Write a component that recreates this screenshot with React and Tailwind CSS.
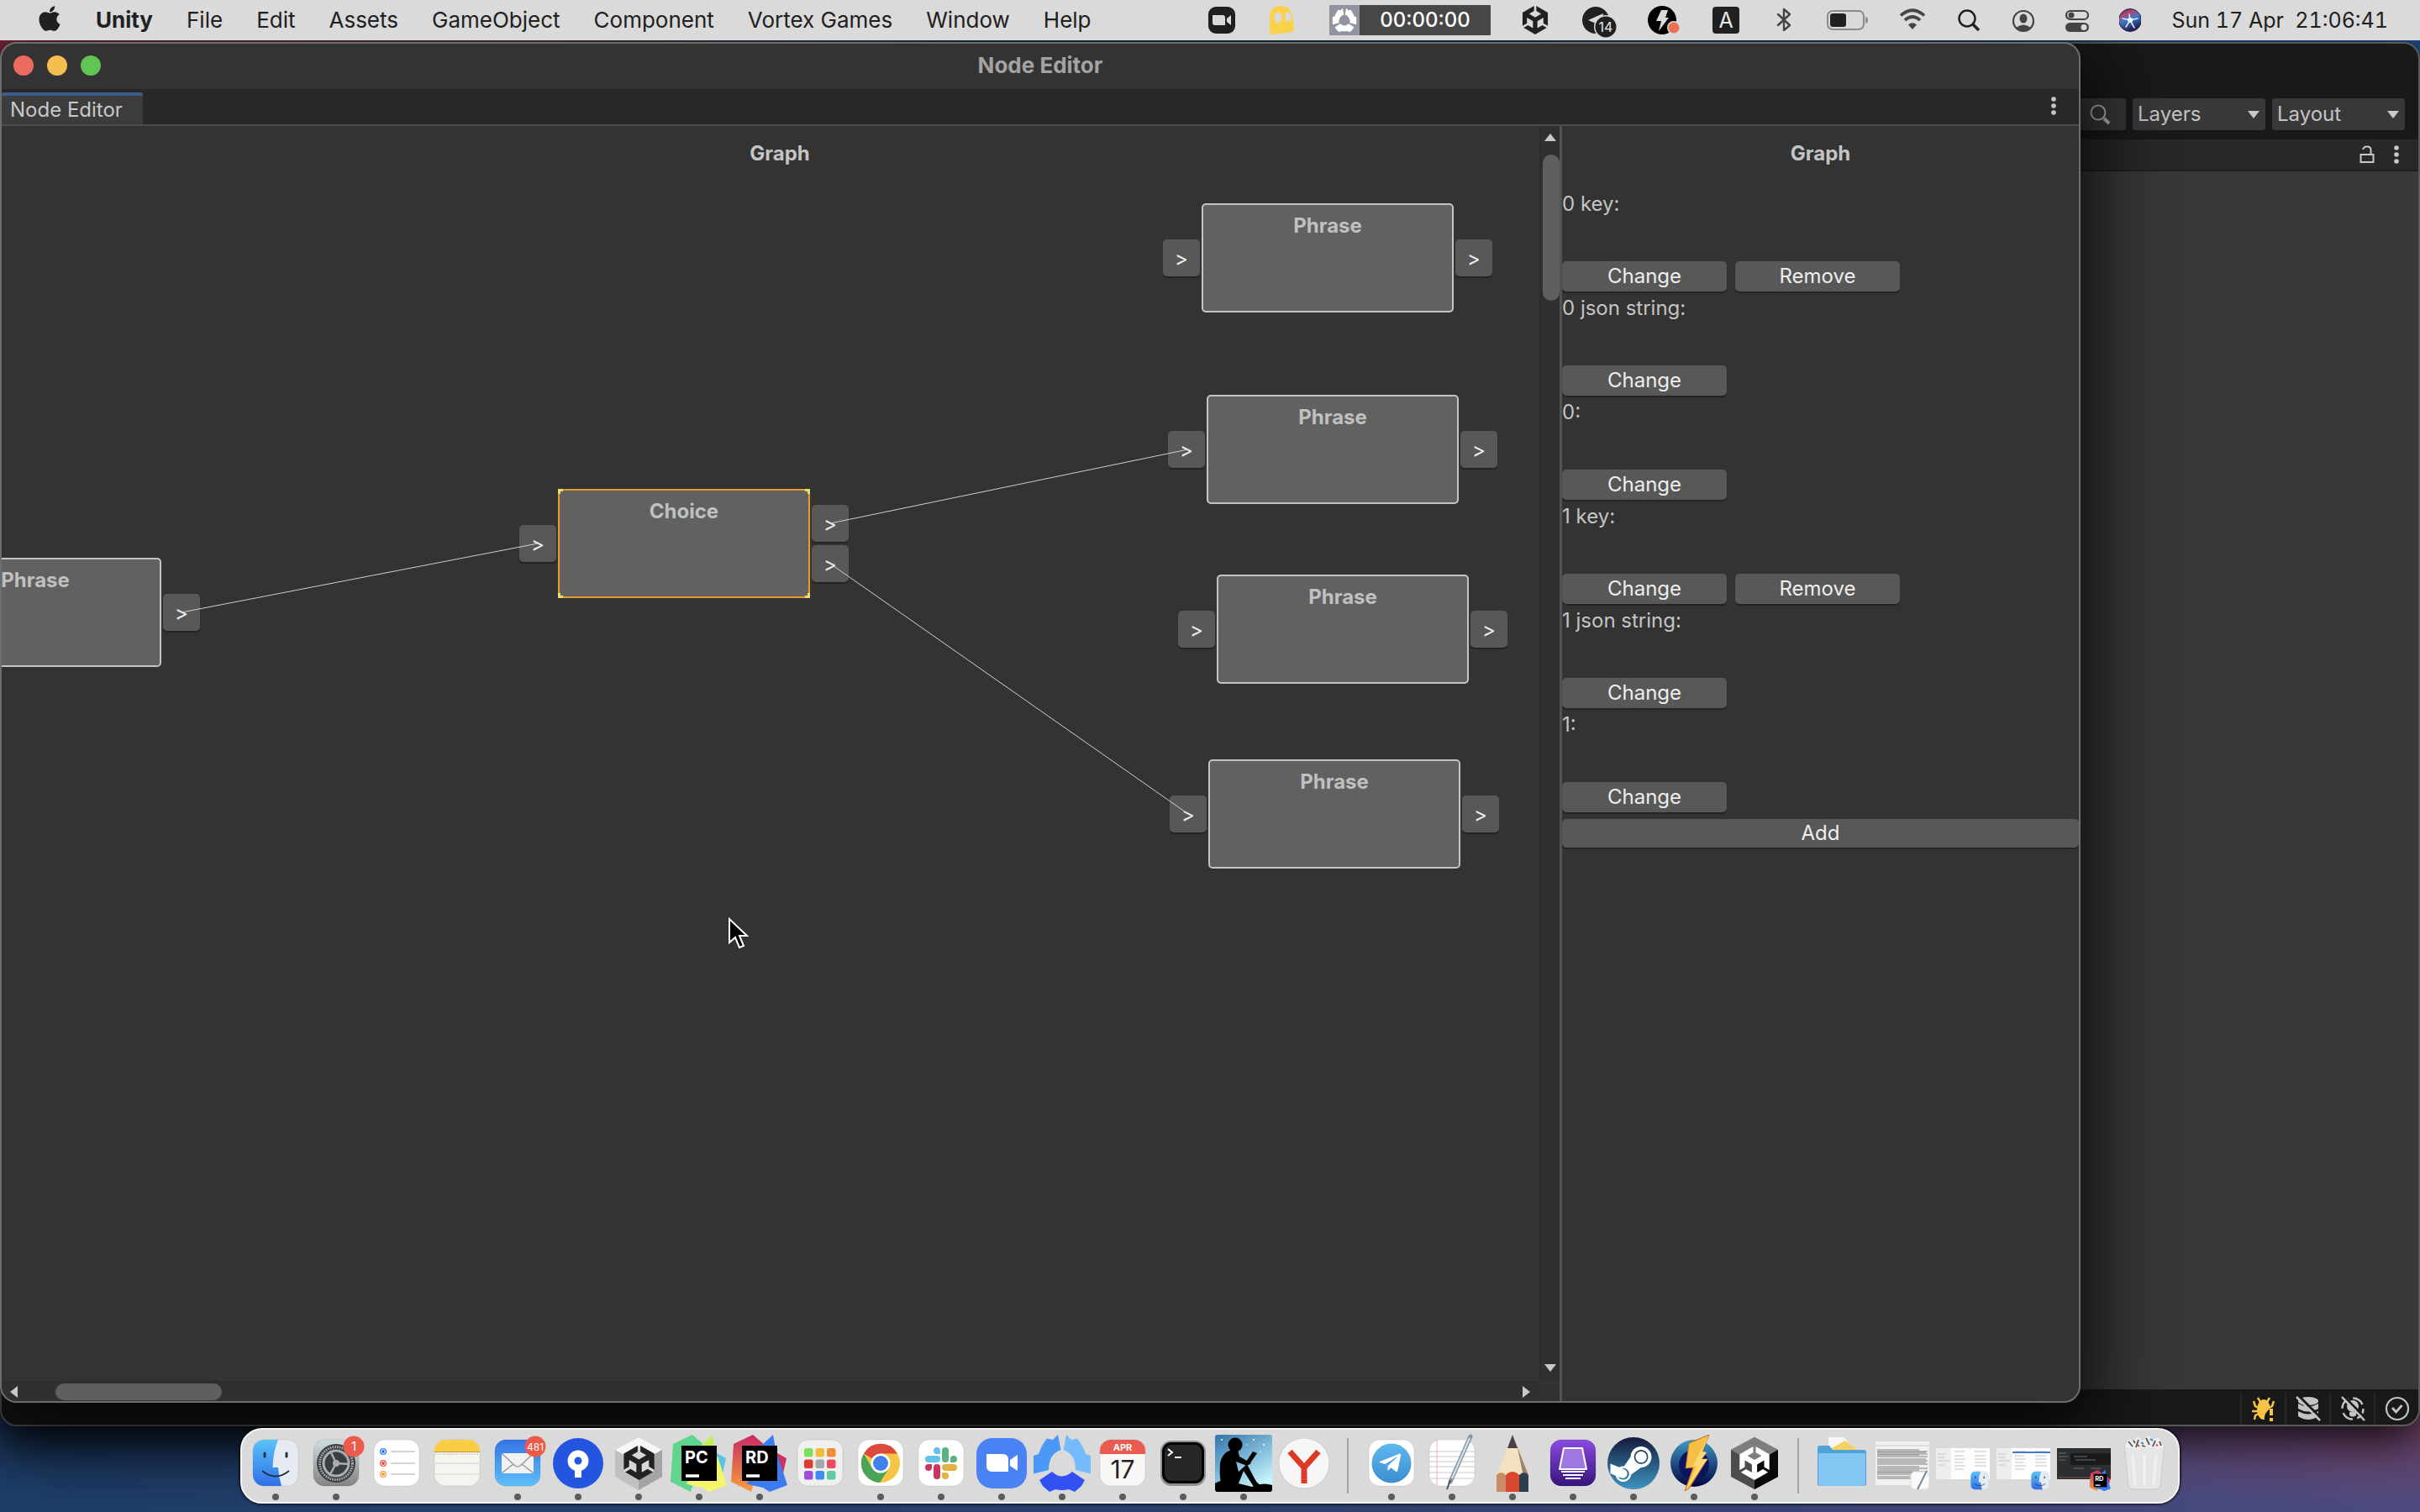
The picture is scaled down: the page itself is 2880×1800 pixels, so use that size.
import React from "react";
import { FaApple, FaSteamSymbol, FaTelegramPlane } from "react-icons/fa";
import { SiUnity } from "react-icons/si";

/* ---------- shared drawings ---------- */

function LinearGradient({ id, from, to, x2 = 0, y2 = 1 }) {
  return (
    <linearGradient id={id} x1="0" y1="0" x2={x2} y2={y2}>
      <stop offset="0" stopColor={from} />
      <stop offset="1" stopColor={to} />
    </linearGradient>
  );
}

function Trefoil({ left, right, bottom }) {
  return (
    <g>
      <path d="M31 2 34.500 20Q20 25 20 44L2 48.500V27L8 25Q11 15 18 6.500L25 8Z" fill={left} />
      <path d="M41 2 37.500 20Q52 25 52 44L70 48.500V27L64 25Q61 15 54 6.500L47 8Z" fill={right} />
      <path d="M24 46Q36 57 48 46L63 56 59 63 51 70 44 67Q36 69 28 67L21 70 13 63 9 56Z" fill={bottom} />
    </g>
  );
}

function Glyph({ w, children, label }) {
  return (
    <svg width={w} height="48" viewBox={`0 0 ${w} 48`} className="shrink-0" role="img" aria-label={label}>
      {children}
    </svg>
  );
}

function KebabIcon() {
  return (
    <svg width="8" height="22" viewBox="0 0 8 22" fill="#c8c8c8">
      <circle cx="4" cy="3" r="2.800" />
      <circle cx="4" cy="11" r="2.800" />
      <circle cx="4" cy="19" r="2.800" />
    </svg>
  );
}

/* ---------- menu bar ---------- */

const menus = ["File", "Edit", "Assets", "GameObject", "Component", "Vortex Games", "Window", "Help"];

function MenuBar() {
  return (
    <header className="relative z-10 flex h-12 shrink-0 items-center justify-between bg-[#dadada] pr-[38px] pl-[42px] text-[26px] leading-8 text-[#202020]">
      <nav className="flex items-center gap-10 whitespace-nowrap">
        <button aria-label="Apple menu" className="-mt-1 w-8"><FaApple size={34} /></button>
        <button className="font-bold">Unity</button>
        {menus.map((m) => <button key={m}>{m}</button>)}
      </nav>
      <div className="flex items-center gap-9">
        <Glyph w={32} label="Camera">
          <rect y="8" width="32" height="32" rx="9" fill="#202020" />
          <path d="M5 18h12a3 3 0 0 1 3 3v9H8a3 3 0 0 1-3-3zM22 22l5-4v12l-5-4z" fill="#dadada" />
        </Glyph>
        <Glyph w={40} label="Ghost">
          <path d="M5 38V20C5 11 11 7 19 7c9 0 13 7 13.500 15L34 33c0 5-3 5-7 6-7 0-12 2-19 2-2 0-3-1-3-3z" fill="#f9d14a" />
          <ellipse cx="15" cy="21" rx="4.500" ry="6.500" fill="#dadada" />
          <ellipse cx="27" cy="20" rx="4" ry="5.500" fill="#dadada" />
        </Glyph>
        <div className="flex h-9 w-48 bg-[#474747] text-white">
          <span className="flex w-9 items-center justify-center bg-[#9295a1]">
            <svg width="30" height="30" viewBox="0 0 72 72"><Trefoil left="#fff" right="#fff" bottom="#fff" /></svg>
          </span>
          <span className="flex flex-1 items-center justify-center text-2xl leading-8 font-medium">00:00:00</span>
        </div>
        <span className="flex w-[34px] justify-center"><SiUnity size={34} /></span>
        <Glyph w={44} label="Telegram, 14 unread">
          <circle cx="19" cy="24" r="16" fill="#202020" />
          <path d="M10 24 28 16 25 30 17 27z" fill="#dadada" />
          <circle cx="31" cy="32" r="14" fill="#dadada" />
          <circle cx="31" cy="32" r="12.500" fill="#202020" />
          <text x="31" y="38" textAnchor="middle" fontSize="16" fill="#e8e8e8">14</text>
        </Glyph>
        <Glyph w={40} label="Power">
          <circle cx="18" cy="24" r="17" fill="#000" />
          <path d="M17 12h8l-3 9h4L14 37l3-12h-6z" fill="#dadada" />
          <circle cx="32" cy="33" r="8" fill="#dadada" />
          <circle cx="32" cy="33" r="6.500" fill="#ec7150" />
        </Glyph>
        <Glyph w={36} label="Input source">
          <rect x="2" y="8" width="32" height="32" rx="4" fill="#202020" />
          <text x="18" y="33" textAnchor="middle" fontSize="25" fill="#e8e8e8">A</text>
        </Glyph>
        <span className="flex w-[30px] justify-center">
          <svg width="20" height="30" viewBox="0 0 20 30" fill="none" stroke="#444" strokeWidth="2.400" strokeLinejoin="round" strokeLinecap="round">
            <path d="M3 8 17 21 10 27V2l7 6L3 21" />
          </svg>
        </span>
        <Glyph w={50} label="Battery">
          <rect x="1" y="13" width="43" height="22" rx="6" fill="none" stroke="#8a8a8a" strokeWidth="2" />
          <rect x="4" y="16" width="19" height="16" rx="3" fill="#202020" />
          <path d="M46 20c4 1 4 7 0 8z" fill="#8a8a8a" />
        </Glyph>
        <Glyph w={32} label="Wi-Fi">
          <path d="M2 18.500Q16 6 30 18.500M7 24Q16 16 25 24" fill="none" stroke="#444" strokeWidth="3.600" />
          <path d="M11 29.500Q16 25 21 29.500L16 35z" fill="#444" />
        </Glyph>
        <Glyph w={30} label="Search">
          <circle cx="13" cy="22" r="9.500" fill="none" stroke="#202020" strokeWidth="2.500" />
          <path d="M20 29l7 7" stroke="#202020" strokeWidth="3.400" />
        </Glyph>
        <Glyph w={28} label="User">
          <circle cx="14" cy="25" r="12" fill="none" stroke="#444" strokeWidth="2.200" />
          <ellipse cx="14" cy="22" rx="4.500" ry="5.500" fill="#444" />
          <path d="M5 33Q14 26 23 33 14 41 5 33z" fill="#444" />
        </Glyph>
        <Glyph w={28} label="Control centre">
          <rect x="1" y="13" width="26" height="10" rx="5" fill="none" stroke="#444" strokeWidth="2.200" />
          <circle cx="7" cy="18" r="3.500" fill="#444" />
          <rect y="27" width="28" height="11" rx="5.500" fill="#444" />
          <circle cx="22" cy="32.500" r="3.500" fill="#dadada" />
        </Glyph>
        <Glyph w={26} label="Siri">
          <defs>
            <linearGradient id="siri" x1="0" y1="0" x2="0.400" y2="1">
              <stop offset="0" stopColor="#3b2a63" />
              <stop offset="0.300" stopColor="#b8446f" />
              <stop offset="0.550" stopColor="#3f78c8" />
              <stop offset="1" stopColor="#241c50" />
            </linearGradient>
          </defs>
          <circle cx="13" cy="24" r="13.500" fill="url(#siri)" stroke="#2a2450" />
          <path d="M13 24 22 22M13 24 18 33M13 24 8 32M13 24 4 22M13 24 12 17" stroke="#c8eef8" strokeWidth="1.600" strokeLinecap="round" />
          <circle cx="13" cy="24" r="3" fill="#e8fafd" />
        </Glyph>
        <time className="w-[258px] text-right text-[25px] whitespace-pre tabular-nums">Sun 17 Apr  21:06:41</time>
      </div>
    </header>
  );
}

/* ---------- background editor window ---------- */

function ToolbarSelect({ label }) {
  return (
    <label className="relative block">
      <select aria-label={label} className="h-[38px] w-[158px] appearance-none rounded-[3px] bg-[#383838] pl-[6px] text-2xl leading-8 text-[#c4c4c4]">
        <option>{label}</option>
      </select>
      <svg width="14" height="9" viewBox="0 0 14 9" className="pointer-events-none absolute top-[15px] right-[7px]">
        <path d="M0 0h14L7 9z" fill="#c8c8c8" />
      </svg>
    </label>
  );
}

function StatusButton({ label, children }) {
  return (
    <button aria-label={label} className="flex w-[53px] items-center justify-center border-l-2 border-[#262626]">
      <svg width="30" height="30" viewBox="0 0 30 30">{children}</svg>
    </button>
  );
}

function EditorWindow() {
  return (
    <section className="absolute inset-x-0 top-[2px] bottom-[102px] flex flex-col overflow-hidden rounded-[20px] border-2 border-[#5a5a5a] bg-[#191919] shadow-[0_16px_50px_rgba(0,0,0,0.85)]">
      <div className="flex h-[114px] items-end justify-end gap-2 pr-4 pb-[11px]">
        <button aria-label="Search" className="flex h-[38px] w-20 items-center justify-end rounded-[3px] bg-[#383838] pr-[18px]">
          <svg width="25" height="25" viewBox="0 0 25 25" fill="none" stroke="#b4b4b4">
            <circle cx="10" cy="10" r="8.500" strokeWidth="2" />
            <path d="M17 17l6 6" strokeWidth="4" />
          </svg>
        </button>
        <ToolbarSelect label="Layers" />
        <ToolbarSelect label="Layout" />
      </div>
      <div className="flex h-[38px] items-center justify-end gap-[22px] border-b-2 border-[#202020] bg-[#282828] pr-[22px]">
        <svg width="18" height="22" viewBox="0 0 18 22" fill="none" stroke="#c8c8c8" strokeWidth="2">
          <rect x="1.500" y="11" width="15" height="9" />
          <path d="M4 5Q5 1.500 9 1.500q4.500 0 4.500 4V11" />
        </svg>
        <KebabIcon />
      </div>
      <div className="flex-1 bg-[#383838]" />
      <footer className="flex h-[42px] justify-end pt-1">
        <StatusButton label="Debugger">
          <ellipse cx="15" cy="16" rx="8" ry="12" fill="#f7c344" />
          <path d="M8 2l3 5M22 2l-3 5M3 6l2 6 4 2M27 6l-2 6-4 2M1 18h7M4 28l1-5 4-2" fill="none" stroke="#f7c344" strokeWidth="2.500" />
          <path d="M30 14v16H16q-2-10 8-16z" fill="#191919" />
          <path d="M24 15v8M24 26v4" stroke="#f7c344" strokeWidth="4" />
        </StatusButton>
        <StatusButton label="Cache server">
          <ellipse cx="15" cy="6" rx="12" ry="5" fill="#c4c4c4" />
          <path d="M3 9q12 7 24 0v6q-12 7-24 0zM3 18q12 7 24 0v6q-12 8-24 0z" fill="#c4c4c4" />
          <path d="M5 1l27 27" stroke="#191919" strokeWidth="3" />
          <path d="M1 1l28 28" stroke="#c4c4c4" strokeWidth="2.500" />
        </StatusButton>
        <StatusButton label="Auto lighting">
          <circle cx="15" cy="15" r="12.500" fill="none" stroke="#c4c4c4" strokeWidth="2.500" strokeDasharray="14 5.600" />
          <circle cx="15" cy="12" r="7" fill="#c4c4c4" />
          <path d="M11 19h8v4q-4 3-8 0z" fill="#c4c4c4" />
          <path d="M5 1l27 27" stroke="#191919" strokeWidth="3" />
          <path d="M2 1l27 28" stroke="#c4c4c4" strokeWidth="2.500" />
        </StatusButton>
        <StatusButton label="Progress">
          <circle cx="15" cy="15" r="13" fill="none" stroke="#c4c4c4" strokeWidth="2.200" />
          <path d="M9 14l4.500 5 7-8" fill="none" stroke="#c4c4c4" strokeWidth="2.800" />
        </StatusButton>
      </footer>
    </section>
  );
}

/* ---------- node graph ---------- */

const nodes = [
  { title: "Phrase", inputs: [65], outputs: [65], place: "left-[-110px] top-[514px]" },
  { title: "Choice", inputs: [65], outputs: [41, 89], place: "left-[662px] top-[432px]", selected: true },
  { title: "Phrase", inputs: [65], outputs: [65], place: "left-[1428px] top-[92px]" },
  { title: "Phrase", inputs: [65], outputs: [65], place: "left-[1434px] top-[320px]" },
  { title: "Phrase", inputs: [65], outputs: [65], place: "left-[1446px] top-[534px]" },
  { title: "Phrase", inputs: [65], outputs: [65], place: "left-[1436px] top-[754px]" },
];

function Port({ label }) {
  return (
    <button aria-label={label} className="h-11 w-11 rounded-[5px] bg-[#585858] pt-[2px] text-2xl leading-8 text-[#eee] shadow-[0_2px_1px_#242424]">
      &gt;
    </button>
  );
}

function Node({ title, inputs, outputs, place, selected }) {
  return (
    <div className={`absolute flex items-center ${place}`}>
      <div className="absolute right-full mr-[2px] flex flex-col gap-1">
        {inputs.map((p) => <Port key={p} label={`${title} input`} />)}
      </div>
      <div className={`h-[130px] w-[300px] border-2 bg-[#616161] pt-[9px] text-center text-2xl leading-8 font-bold text-[#c0c0c0] ${selected ? "border-[#e89a2e]" : "rounded-[5px] border-[#c4c4c4]"}`}>
        {title}
      </div>
      {selected && (
        <svg width="300" height="130" viewBox="0 0 300 130" className="pointer-events-none absolute inset-0" fill="none" stroke="#e6e06a" strokeWidth="3">
          <path d="M1.500 6V1.500H6M294 1.500h4.500V6M1.500 124v4.500H6M294 128.500h4.500V124" />
        </svg>
      )}
      <div className="absolute left-full ml-[2px] flex flex-col gap-1">
        {outputs.map((p) => <Port key={p} label={`${title} output`} />)}
      </div>
    </div>
  );
}

function ScrollArrow({ label, d, w, h, size = "h-6 w-6" }) {
  return (
    <button aria-label={label} className={`flex shrink-0 items-center justify-center ${size}`}>
      <svg width={w} height={h} viewBox={`0 0 ${w} ${h}`}><path d={d} fill="#c8c8c8" /></svg>
    </button>
  );
}

function Canvas() {
  return (
    <div className="grid min-w-0 flex-1 grid-cols-[1fr_24px] grid-rows-[1fr_24px]">
      <div className="relative min-w-0 overflow-hidden">
        <h2 className="w-[1852px] pt-[17px] text-center text-2xl leading-8 font-bold text-[#c4c4c4]">Graph</h2>
        {nodes.map((n) => <Node key={n.place} {...n} />)}
        <svg width="1830" height="1400" viewBox="0 0 1830 1400" className="pointer-events-none absolute top-0 left-0" fill="none" stroke="#cfcfcf">
          <path d="M214 579 638 497M986 473 1412 385M986 521 1412 819" />
          <path d="M866 944v28l7-6 5 12 5-2-5-12h9z" fill="#000" stroke="#fff" strokeWidth="2" />
        </svg>
      </div>
      <div className="flex flex-col items-center border-l-2 border-[#2d2d2d] bg-[#303030]">
        <ScrollArrow label="Scroll up" d="M0 9h14L7 0z" w={14} h={9} size="h-[26px] w-6" />
        <div className="flex w-full flex-1 flex-col items-end pt-2">
          <div className="h-[174px] w-5 rounded-full bg-[#5f5f5f]" />
        </div>
        <ScrollArrow label="Scroll down" d="M0 0h14L7 9z" w={14} h={9} size="h-8 w-6" />
      </div>
      <div className="flex items-center border-t-2 border-[#2d2d2d] bg-[#303030]">
        <ScrollArrow label="Scroll left" d="M9 0v14L0 7z" w={9} h={14} size="h-6 w-7" />
        <div className="flex-1 pl-9">
          <div className="h-5 w-[198px] rounded-full bg-[#5f5f5f]" />
        </div>
        <ScrollArrow label="Scroll right" d="M0 0v14l9-7z" w={9} h={14} size="h-6 w-8" />
      </div>
      <div className="bg-[#323232]" />
    </div>
  );
}

/* ---------- inspector column ---------- */

const fields = [
  { label: "0 key:", removable: true },
  { label: "0 json string:" },
  { label: "0:" },
  { label: "1 key:", removable: true },
  { label: "1 json string:" },
  { label: "1:" },
];

function PanelButton({ children, wide }) {
  return (
    <button className={`rounded-[5px] bg-[#585858] text-2xl leading-8 text-[#eee] shadow-[0_2px_1px_#242424] ${wide ? "h-[34px] w-full" : "h-9 w-[196px]"}`}>
      {children}
    </button>
  );
}

function Inspector() {
  return (
    <aside className="w-[618px] shrink-0 border-l-[3px] border-[#525450]">
      <h2 className="pt-[17px] pb-[26px] text-center text-2xl leading-8 font-bold text-[#c4c4c4]">Graph</h2>
      {fields.map((f) => (
        <div key={f.label} className="pb-[2px]">
          <p className="h-[86px] pt-[2px] text-2xl leading-8 text-[#c4c4c4]">{f.label}</p>
          <div className="flex gap-[10px]">
            <PanelButton>Change</PanelButton>
            {f.removable && <PanelButton>Remove</PanelButton>}
          </div>
        </div>
      ))}
      <div className="pt-[6px]"><PanelButton wide>Add</PanelButton></div>
    </aside>
  );
}

function NodeEditorWindow() {
  return (
    <section className="absolute top-[2px] right-[404px] bottom-[130px] left-0 flex flex-col overflow-hidden rounded-[20px] border-2 border-[#6d6d6d] bg-[#333] shadow-[0_30px_90px_20px_rgba(0,0,0,0.75)]">
      <div className="relative flex h-[54px] shrink-0 items-center justify-center pb-[2px]">
        <div className="absolute left-[14px] flex gap-4">
          <button aria-label="Close" className="h-6 w-6 rounded-full bg-[#ed6a5e]" />
          <button aria-label="Minimise" className="h-6 w-6 rounded-full bg-[#f5bf4f]" />
          <button aria-label="Zoom" className="h-6 w-6 rounded-full bg-[#61c554]" />
        </div>
        <h1 className="text-[26px] leading-8 font-bold text-[#a3a3a3]">Node Editor</h1>
      </div>
      <div className="flex h-[44px] shrink-0 items-end justify-between border-b-2 border-[#4c4c4c] bg-[#282828] pr-[26px]">
        <button className="h-[38px] w-[168px] rounded-t-[3px] border-t-4 border-[#3a5f8f] bg-[#3c3c3c] pl-[10px] text-left text-2xl leading-8 text-[#c8c8c8]">
          Node Editor
        </button>
        <button aria-label="Window options" className="mb-[11px]"><KebabIcon /></button>
      </div>
      <div className="flex min-h-0 flex-1">
        <Canvas />
        <Inspector />
      </div>
    </section>
  );
}

/* ---------- dock ---------- */

function Tile({ fill = "#fff" }) {
  return <rect x="9" y="8" width="54" height="55" rx="13" fill={fill} stroke="#00000018" />;
}

function Badge({ text }) {
  return (
    <g>
      <circle cx="57" cy="16" r="12.500" fill="#eb5a4b" />
      <text x="57" y="21" textAnchor="middle" fontSize={text.length > 2 ? 12 : 15} fill="#fff">{text}</text>
    </g>
  );
}

function FinderFace() {
  return (
    <g>
      <Tile fill="#e6ebf3" />
      <path d="M22 8H39Q33 22 32.500 41H39Q39.500 52 43 63H22A13 13 0 0 1 9 50V21A13 13 0 0 1 22 8z" fill="url(#d-finder)" />
      <path d="M23 24v4M49 24v4" stroke="#22303f" strokeWidth="3" strokeLinecap="round" />
      <path d="M20 45Q36 58 52 45" fill="none" stroke="#22303f" strokeWidth="1.800" />
    </g>
  );
}

function JetBrains({ text, a, b, c, d }) {
  return (
    <g>
      <path d="M5 13 28 2 42 14 34 44 26 70 2 58z" fill={a} />
      <path d="M38 15 52 2 56 25z" fill={b} />
      <path d="M50 20 68 30 64 48 50 50z" fill={c} />
      <path d="M20 60 58 28 69 62 48 70 40 65 26 62z" fill={d} />
      <rect x="15" y="15" width="42" height="42" fill="#000" />
      <text x="19" y="36" fontSize="20" fontWeight="700" fill="#fff">{text}</text>
      <path d="M20 51h16" stroke="#fff" strokeWidth="3.500" />
    </g>
  );
}

function RiderIcon() {
  return <JetBrains text="RD" a="url(#d-rd)" b="#3b7cf0" c="#d0305f" d="#3c7bf0" />;
}

function DocThumb() {
  const rows = [24, 27, 30, 35, 39, 44, 48, 51, 56];
  return (
    <g>
      <rect x="4" y="10" width="64" height="52" fill="#f0f0f0" />
      <path d="M4 15h64" stroke="#ccc" />
      {rows.map((y) => <path key={y} d={`M6 ${y - 4}h${y % 2 ? 58 : 50}M6 ${y - 2}h60`} stroke="#808080" />)}
      <rect x="46" y="46" width="22" height="21" rx="5" fill="#fafafa" stroke="#ddd" />
      <path d="M65 45 54 67" stroke="#778899" strokeWidth="2" />
    </g>
  );
}

function FinderThumb({ highlighted }) {
  return (
    <g>
      <rect x="4" y="18" width="64" height="37" fill="#fdfdfd" />
      <path d="M4 18h18v37H4z" fill="#ededed" />
      <path d="M6 25h9M6 29h8M6 33h14M6 38h8M26 22h12M26 27h11M26 31h13M26 35h10M26 39h13M26 43h11M50 22h14M50 27h13M50 31h14M50 35h13M50 39h14" stroke="#c4c4c4" />
      {highlighted && <path d="M23 23h45" stroke="#4378d8" strokeWidth="2" />}
      <svg x="45" y="45" width="22" height="23" viewBox="8 7 56 57"><FinderFace /></svg>
    </g>
  );
}

const dockGroups = [
  [
    { name: "Finder", running: true, art: <FinderFace /> },
    {
      name: "System Preferences", running: true,
      art: (
        <g>
          <Tile fill="url(#d-grey)" />
          <circle cx="36" cy="36" r="23" fill="#3b3e41" />
          <circle cx="36" cy="36" r="19.500" fill="none" stroke="#a9adb0" strokeWidth="3" strokeDasharray="1.600 1.200" />
          <circle cx="36" cy="36" r="15" fill="none" stroke="#a9adb0" strokeWidth="3" />
          <path d="M36 36 29 21M36 36 52 37M36 36 28 51" stroke="#a9adb0" strokeWidth="2.500" />
          <circle cx="36" cy="36" r="4" fill="#a9adb0" />
          <Badge text="1" />
        </g>
      ),
    },
    {
      name: "Reminders",
      art: (
        <g>
          <Tile />
          {[["#3478f6", 22], ["#eb4b3d", 36], ["#f09a37", 49]].map(([c, y]) => (
            <g key={y}>
              <circle cx="20" cy={y} r="4" fill={c} />
              <circle cx="20" cy={y} r="2.500" fill={c} stroke="#fff" />
              <path d={`M29 ${y}h29`} stroke="#c4c4c8" strokeWidth="1.500" />
            </g>
          ))}
        </g>
      ),
    },
    {
      name: "Notes",
      art: (
        <g>
          <Tile fill="#f5f4ef" />
          <path d="M9 22v-1A13 13 0 0 1 22 8H50A13 13 0 0 1 63 21v1z" fill="#f9cd45" />
          <path d="M9 22.500h54" stroke="#b99a3a" />
          <path d="M10 25h52" stroke="#999" strokeDasharray="1 1.500" />
          <path d="M10 36h52M10 49h52" stroke="#d0d0cc" />
        </g>
      ),
    },
    {
      name: "Mail", running: true,
      art: (
        <g>
          <Tile fill="url(#d-mail)" />
          <rect x="17" y="24" width="38" height="24" rx="3" fill="#f2f2f2" />
          <path d="M18 25 33 39q3 2 6 0L54 25M18 47 31 37M54 47 41 37" fill="none" stroke="#9a9a9a" strokeWidth="1.500" />
          <Badge text="481" />
        </g>
      ),
    },
    {
      name: "Sourcetree", running: true,
      art: (
        <g>
          <circle cx="36" cy="36" r="30" fill="#2355e0" />
          <circle cx="36" cy="33" r="8.500" fill="none" stroke="#fff" strokeWidth="8" />
          <path d="M36 41v12" stroke="#fff" strokeWidth="8" />
        </g>
      ),
    },
    {
      name: "Unity Hub", running: true,
      art: (
        <g>
          <path d="M36 5 64 20V52L36 68 8 52V20z" fill="#c0c0c0" />
          <path d="M36 5 64 20 36 36 8 20z" fill="#f6f6f6" />
          <path d="M36 36 64 20V52L36 68z" fill="#a4a4a4" />
          <path d="M36 16 54 26V46L36 56 18 46V26z" fill="#d8d8d8" />
          <SiUnity x={16} y={15} size={41} color="#222" />
        </g>
      ),
    },
    { name: "PyCharm", running: true, art: <JetBrains text="PC" a="#5fd58d" b="#c2f05a" c="#5ac3e8" d="#f5f66a" /> },
    { name: "Rider", running: true, art: <RiderIcon /> },
    {
      name: "Launchpad",
      art: (
        <g>
          <Tile fill="#f0f0f0" />
          {["#7ce05a", "#f5b93b", "#ef8e34", "#dd3a30", "#a4a8ac", "#ee4863", "#a14bd8", "#3d8cf5", "#5fcca0"].map((c, i) => (
            <rect key={c} x={17 + (i % 3) * 13.5} y={18 + Math.floor(i / 3) * 13.5} width="10.500" height="10.500" rx="2.500" fill={c} />
          ))}
        </g>
      ),
    },
    {
      name: "Chrome", running: true,
      art: (
        <g>
          <Tile />
          <circle cx="36" cy="36" r="23" fill="#f7c544" />
          <path d="M36 36 16 24.500A23 23 0 0 1 56 24.500H36z" fill="#dc4a3d" />
          <path d="M16 24.500A23 23 0 0 0 35 59L46 42 26 42z" fill="#4aa457" />
          <circle cx="36" cy="36" r="11.500" fill="#fff" />
          <circle cx="36" cy="36" r="9" fill="#4081ec" />
        </g>
      ),
    },
    {
      name: "Slack", running: true,
      art: (
        <g>
          <Tile />
          <g fill="#62c4ec"><rect x="17" y="27" width="18" height="8" rx="4" /><path d="M35 25h-4a4 4 0 1 1 4-4z" /></g>
          <g fill="#5bb381"><rect x="37" y="17" width="8" height="18" rx="4" /><path d="M47 35v-4a4 4 0 1 1 4 4z" /></g>
          <g fill="#e0b344"><rect x="37" y="37" width="18" height="8" rx="4" /><path d="M37 47h4a4 4 0 1 1-4 4z" /></g>
          <g fill="#d0335f"><rect x="27" y="37" width="8" height="18" rx="4" /><path d="M25 37v4a4 4 0 1 1-4-4z" /></g>
        </g>
      ),
    },
    {
      name: "Zoom", running: true,
      art: (
        <g>
          <rect x="6" y="6" width="60" height="60" rx="19" fill="#4a82f4" />
          <path d="M18 25h20a6 6 0 0 1 6 6v15H24a6 6 0 0 1-6-6zM46 32l9-6v19l-9-6z" fill="#fff" />
        </g>
      ),
    },
    { name: "Time tracker", running: true, art: <Trefoil left="#4a98f8" right="#76bbfb" bottom="#3350f2" /> },
    {
      name: "Calendar", running: true,
      art: (
        <g>
          <Tile fill="#f8f7f5" />
          <path d="M9 25v-4A13 13 0 0 1 22 8H50A13 13 0 0 1 63 21v4z" fill="#eb5a4e" />
          <text x="36" y="21" textAnchor="middle" fontSize="11" fontWeight="700" fill="#fff">APR</text>
          <text x="36" y="54" textAnchor="middle" fontSize="30" fill="#222">17</text>
        </g>
      ),
    },
    {
      name: "Terminal", running: true,
      art: (
        <g>
          <rect x="9" y="9" width="54" height="54" rx="13" fill="#8d9093" />
          <rect x="11" y="11" width="50" height="49" rx="11" fill="#000" />
          <rect x="14" y="14" width="44" height="43" rx="8" fill="#262626" />
          <path d="M18 19l5 4-5 4M26 29h8" fill="none" stroke="#fff" strokeWidth="2" />
        </g>
      ),
    },
    {
      name: "Kindle", running: true,
      art: (
        <g>
          <rect x="2" y="2" width="68" height="68" rx="3" fill="url(#d-kindle)" />
          <path d="M2 60Q10 54 22 58L46 64Q60 58 70 62V67a3 3 0 0 1-3 3H5a3 3 0 0 1-3-3z" />
          <circle cx="26" cy="14" r="8.500" />
          <path d="M21 20Q10 24 8 36Q7 50 9 60H30L36 45 48 64 58 63Q52 60 50 56L40 37 30 46 27 34 40 39 45 36 40 33 31 28 29 20z" />
          <path d="M39 34 47 22 52 24 43 37z" />
          <g fill="#fff"><circle cx="48" cy="8" r="1" /><circle cx="60" cy="14" r="1" /><circle cx="10" cy="8" r="1" /><circle cx="56" cy="22" r="0.700" /><circle cx="40" cy="14" r="0.700" /></g>
        </g>
      ),
    },
    {
      name: "Yandex",
      art: (
        <g>
          <circle cx="36" cy="36" r="30" fill="#f6f6f6" stroke="#0000001c" />
          <path d="M19 22 36 41 53 22M36 39V60" fill="none" stroke="#dc3a26" strokeWidth="7" />
        </g>
      ),
    },
  ],
  [
    {
      name: "Telegram", running: true,
      art: (
        <g>
          <Tile />
          <circle cx="36" cy="36" r="23.500" fill="url(#d-telegram)" />
          <FaTelegramPlane x={20} y={21} size={29} color="#fff" />
        </g>
      ),
    },
    {
      name: "TextEdit", running: true,
      art: (
        <g>
          <Tile />
          <path d="M9 22h54M9 28h54M9 34h54M9 40h54M9 47h54M9 54h54" stroke="#c4c8cc" />
          <path d="M18 8v55" stroke="#f0b4b4" />
          <path d="M58 4 34 58" stroke="#8296a8" strokeWidth="5" strokeLinecap="round" />
          <path d="M57 6 36 54" stroke="#dbe5ee" strokeWidth="2" />
          <path d="M34 56 30 67" stroke="#555" strokeWidth="2" />
        </g>
      ),
    },
    {
      name: "Pencil", running: true,
      art: (
        <g>
          <path d="M36 2 55 50V70H17V50z" fill="#f2e2c0" />
          <path d="M36 2 55 50 48 47 42 18z" fill="#a08468" />
          <path d="M36 2 42 18H30z" fill="#4a4148" />
          <path d="M17 50q5-6 11 0V70H17z" fill="#c98c66" />
          <path d="M28 50q8-8 16 0V70H28z" fill="#d8472f" />
          <path d="M44 50q6-6 11 0V70H44z" fill="#2f3e4c" />
        </g>
      ),
    },
    {
      name: "Screen recorder", running: true,
      art: (
        <g>
          <Tile fill="url(#d-purple)" />
          <path d="M25 18H47L52 43H20z" fill="#a077e2" stroke="#fff" strokeWidth="2" strokeLinejoin="round" />
          <path d="M22 46h28M24 50h24M27 54h18" stroke="#fff" strokeWidth="2" />
        </g>
      ),
    },
    {
      name: "Steam", running: true,
      art: (
        <g>
          <circle cx="36" cy="36" r="31" fill="url(#d-steam)" />
          <FaSteamSymbol x={5} y={9} size={56} color="#fff" />
        </g>
      ),
    },
    {
      name: "Bolt", running: true,
      art: (
        <g>
          <circle cx="36" cy="36" r="28" fill="url(#d-bolt)" />
          <circle cx="36" cy="38" r="18" fill="#0a1560" />
          <path d="M54 2 30 12 26 42 35 41 25 69 30 66 52 31 45 31 51 23 46 22z" fill="#f6bf45" stroke="#b5682c" />
          <path d="M54 2 34 40 40 39 25 69 52 31 45 31 51 23 46 22z" fill="#fbd873" />
        </g>
      ),
    },
    {
      name: "Unity", running: true,
      art: (
        <g>
          <path d="M36 5 64 20V52L36 67 8 52V20z" fill="#4c4c4c" />
          <path d="M36 5 64 20 36 36 8 20z" fill="#7e7e7e" />
          <path d="M36 36 64 20V52L36 67z" fill="#0a0a0a" />
          <SiUnity x={16} y={16} size={40} color="#fff" />
        </g>
      ),
    },
  ],
  [
    {
      name: "Downloads",
      art: (
        <g>
          <path d="M20 5h18l8 8v14H20z" fill="#f7f7f7" />
          <path d="M20 20 40 9 56 21V28H20z" fill="#f6d263" />
          <path d="M7 18q0-3 3-3h11l4 5H62q3 0 3 3V60q0 3-3 3H10q-3 0-3-3z" fill="#4fa3d8" />
          <path d="M8 24H64V60q0 3-3 3H11q-3 0-3-3z" fill="#83c8f4" />
        </g>
      ),
    },
    { name: "Document window", art: <DocThumb /> },
    { name: "Finder window one", art: <FinderThumb /> },
    { name: "Finder window two", art: <FinderThumb highlighted /> },
    {
      name: "Rider window",
      art: (
        <g>
          <rect x="4" y="18" width="64" height="37" fill="#2c2e30" />
          <path d="M20 24h48v14H20z" fill="#181a1b" />
          <path d="M6 24h9M6 28h11M6 32h8M24 28h16M26 32h24M24 42h12M44 42h12" stroke="#6a6f73" />
          <path d="M5 53h40" stroke="#8a4a4a" />
          <svg x="42" y="43" width="27" height="27" viewBox="0 0 72 72"><RiderIcon /></svg>
        </g>
      ),
    },
    {
      name: "Bin",
      art: (
        <g>
          <path d="M12 13H60L55 62Q54 67 48 67H24Q18 67 17 62z" fill="#e6e6e6" stroke="#cbcbcb" />
          <path d="M13 16 17 7 23 10 28 4 34 9 40 3 46 8 52 5 59 15 52 19 40 17 30 20 20 18z" fill="#ededed" />
          <path d="M17 10l5 6M23 9l2 3M29 8l-3 9M38 6l4 8M49 9l-3 7M54 10l2 5M33 15l4 1" stroke="#555" strokeWidth="1.800" />
          <path d="M32 11l3 2M43 7l3 2" stroke="#3f7fd0" strokeWidth="2" />
          <path d="M28 14l2 2M50 14l2 1" stroke="#c9573a" strokeWidth="2" />
          <path d="M22 26l3 36M50 26l-3 36M36 26v36" stroke="#f2f2f2" strokeWidth="3" />
        </g>
      ),
    },
  ],
];

function DockItem({ name, art, running }) {
  return (
    <button aria-label={name} className="flex w-[72px] flex-col items-center">
      <svg width="72" height="72" viewBox="0 0 72 72" className="overflow-visible">{art}</svg>
      <span className={`h-2 w-2 rounded-full ${running ? "bg-[#5c5c5c]" : ""}`} />
    </button>
  );
}

function Dock() {
  return (
    <footer className="absolute bottom-[10px] left-1/2 flex h-[90px] -translate-x-1/2 rounded-[26px] border-2 border-[#f4f4f4] bg-[#dadada] px-1 pt-1 shadow-[0_0_3px_1px_rgba(0,0,0,0.9)]">
      <svg width="0" height="0" className="absolute">
        <defs>
          <LinearGradient id="d-finder" from="#5bc3f8" to="#2f6fe8" />
          <LinearGradient id="d-grey" from="#cfdde2" to="#86847f" />
          <LinearGradient id="d-mail" from="#3573e6" to="#5cc0f8" />
          <LinearGradient id="d-rd" from="#c92a63" to="#f6a03c" />
          <LinearGradient id="d-kindle" from="#2f74ab" to="#c5f4fc" x2={0.6} />
          <LinearGradient id="d-telegram" from="#5fb8ee" to="#3a8fd0" />
          <LinearGradient id="d-purple" from="#8a4be0" to="#35147c" />
          <LinearGradient id="d-steam" from="#131c3c" to="#3f94c0" />
          <LinearGradient id="d-bolt" from="#3f9bc8" to="#02033f" />
        </defs>
      </svg>
      {dockGroups.map((group, i) => (
        <React.Fragment key={i}>
          {i > 0 && <span className="mx-[15px] mt-[6px] h-[66px] w-[2px] bg-[#a2a2a2]" />}
          {group.map((item) => <DockItem key={item.name} {...item} />)}
        </React.Fragment>
      ))}
    </footer>
  );
}

export default function App() {
  return (
    <div className="flex h-screen w-full flex-col overflow-hidden bg-linear-to-r from-[#1f3f6b] via-[#2d426f] via-50% to-[#4b4a80] font-['Inter',sans-serif]">
      <MenuBar />
      <main className="relative flex-1">
        <div className="absolute inset-x-0 top-0 h-6 bg-linear-to-r from-[#8c2b45] via-[#1f4a5c] via-40% to-[#1d4a80]" />
        <div className="absolute right-0 bottom-0 h-[180px] w-[600px] bg-radial-[at_100%_30%] from-[#78405f] to-transparent to-70%" />
        <EditorWindow />
        <NodeEditorWindow />
        <Dock />
      </main>
    </div>
  );
}
